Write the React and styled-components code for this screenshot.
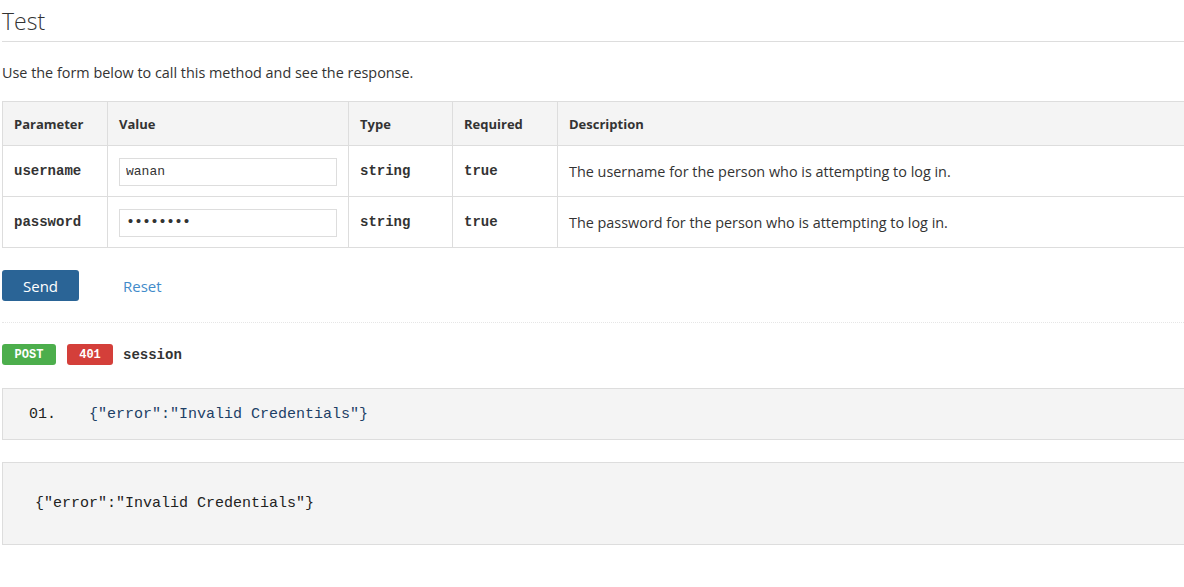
import React, { useState } from 'react'
import styled, { createGlobalStyle } from 'styled-components'

const GlobalStyle = createGlobalStyle`
  html, body {
    margin: 0;
    padding: 0;
    background: #fff;
    overflow: hidden;
  }
  body {
    font-family: "Open Sans", "Noto Sans", sans-serif;
    color: #333;
  }
`

const mono = `"Liberation Mono", "Courier New", monospace`

const Page = styled.div`
  width: 1240px;
  padding: 0 0 0 2px;
`

const Title = styled.h2`
  margin: 0;
  padding-top: 8px;
  height: 33px;
  font-size: 23px;
  font-weight: 300;
  line-height: 26px;
  color: #333;
  border-bottom: 1px solid #ddd;
`

const Intro = styled.p`
  margin: 21px 0 18px;
  font-size: 14.4px;
  line-height: 20px;
`

const Table = styled.table`
  width: 100%;
  border-collapse: collapse;
  font-size: 14.4px;

  th, td {
    border: 1px solid #ddd;
    text-align: left;
    padding: 0 11px;
  }
  th {
    background: #f4f4f4;
    height: 43px;
    font-weight: 700;
    font-size: 13px;
  }
  td {
    height: 50px;
  }
`

const Code = styled.td`
  font-family: ${mono};
  font-weight: 700;
  font-size: 14px;
`

const Input = styled.input`
  box-sizing: border-box;
  width: 218px;
  height: 28px;
  border: 1px solid #ddd;
  padding: 0 6px;
  font-family: ${mono};
  font-size: ${p => (p.type === 'password' ? 15 : 13)}px;
  letter-spacing: ${p => (p.type === 'password' ? '-1px' : '0')};
  color: #333;
  outline: none;
  margin-top: 1px;
`

const Actions = styled.div`
  display: flex;
  align-items: center;
  gap: 44px;
  margin-top: 22px;
  padding-bottom: 21px;
  border-bottom: 1px dotted #e6e6e6;
`

const SendButton = styled.button`
  width: 77px;
  height: 31px;
  border: none;
  border-radius: 3px;
  background: #2a6496;
  color: #fff;
  font-family: "Open Sans", sans-serif;
  font-size: 15px;
`

const ResetLink = styled.a`
  color: #428bca;
  font-size: 15px;
  text-decoration: none;
`

const ResponseLine = styled.div`
  display: flex;
  align-items: center;
  gap: 11px;
  margin-top: 21px;
`

const Badge = styled.span`
  display: inline-flex;
  align-items: center;
  justify-content: center;
  width: ${p => p.$w}px;
  height: 21px;
  border-radius: 3px;
  background: ${p => p.$bg};
  color: #fff;
  font-family: ${mono};
  font-weight: 700;
  font-size: 12px;
`

const Endpoint = styled.span`
  font-family: ${mono};
  font-weight: 700;
  font-size: 14px;
  margin-left: -1px;
`

const CodeBox = styled.div`
  box-sizing: border-box;
  display: flex;
  align-items: center;
  background: #f4f4f4;
  border: 1px solid #ddd;
  height: ${p => p.$h}px;
  margin-top: ${p => p.$mt}px;
  padding-left: ${p => p.$pl}px;
  font-family: ${mono};
  font-size: 15px;
`

const LineNo = styled.span`
  color: #222;
  width: 60px;
`

const Json = styled.span`
  color: ${p => p.$c};
`

const params = [
  { name: 'username', value: 'wanan', type: 'text', desc: 'The username for the person who is attempting to log in.' },
  { name: 'password', value: 'password', type: 'password', desc: 'The password for the person who is attempting to log in.' },
]

export default function App() {
  const [values, setValues] = useState(params.map(p => p.value))

  return (
    <Page>
      <GlobalStyle />
      <Title>Test</Title>
      <Intro>Use the form below to call this method and see the response.</Intro>
      <Table>
        <colgroup>
          <col style={{ width: 105 }} />
          <col style={{ width: 239 }} />
          <col style={{ width: 104 }} />
          <col style={{ width: 105 }} />
          <col />
        </colgroup>
        <thead>
          <tr>
            <th>Parameter</th>
            <th>Value</th>
            <th>Type</th>
            <th>Required</th>
            <th>Description</th>
          </tr>
        </thead>
        <tbody>
          {params.map((p, i) => (
            <tr key={p.name}>
              <Code>{p.name}</Code>
              <td>
                <Input
                  type={p.type}
                  value={values[i]}
                  onChange={e => setValues(v => v.map((x, j) => (j === i ? e.target.value : x)))}
                />
              </td>
              <Code>string</Code>
              <Code>true</Code>
              <td>{p.desc}</td>
            </tr>
          ))}
        </tbody>
      </Table>
      <Actions>
        <SendButton>Send</SendButton>
        <ResetLink href="#">Reset</ResetLink>
      </Actions>
      <ResponseLine>
        <Badge $bg="#4cae4c" $w={54}>POST</Badge>
        <Badge $bg="#d43f3a" $w={46}>401</Badge>
        <Endpoint>session</Endpoint>
      </ResponseLine>
      <CodeBox $h={52} $mt={23} $pl={26}>
        <LineNo>01.</LineNo>
        <Json $c="#1d3f66">{'{"error":"Invalid Credentials"}'}</Json>
      </CodeBox>
      <CodeBox $h={83} $mt={22} $pl={32}>
        <Json $c="#222">{'{"error":"Invalid Credentials"}'}</Json>
      </CodeBox>
    </Page>
  )
}
